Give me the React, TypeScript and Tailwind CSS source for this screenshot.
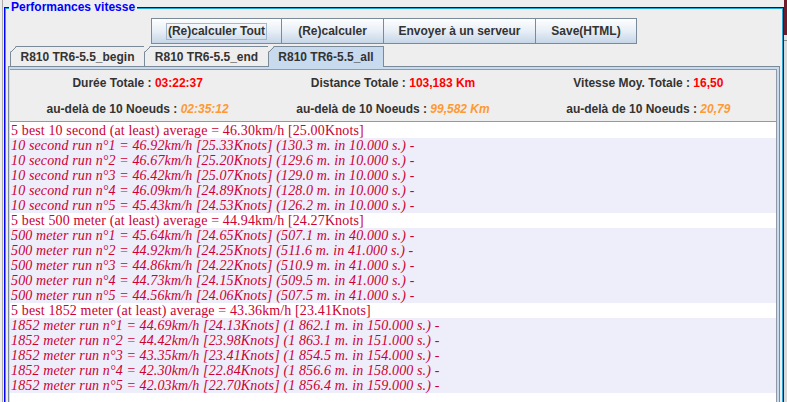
const sections = [
  {
    title: '5 best 10 second (at least) average = 46.30km/h [25.00Knots]',
    runs: [
      '10 second run n°1 = 46.92km/h [25.33Knots] (130.3 m. in 10.000 s.) -',
      '10 second run n°2 = 46.67km/h [25.20Knots] (129.6 m. in 10.000 s.) -',
      '10 second run n°3 = 46.42km/h [25.07Knots] (129.0 m. in 10.000 s.) -',
      '10 second run n°4 = 46.09km/h [24.89Knots] (128.0 m. in 10.000 s.) -',
      '10 second run n°5 = 45.43km/h [24.53Knots] (126.2 m. in 10.000 s.) -',
    ],
  },
  {
    title: '5 best 500 meter (at least) average = 44.94km/h [24.27Knots]',
    runs: [
      '500 meter run n°1 = 45.64km/h [24.65Knots] (507.1 m. in 40.000 s.) -',
      '500 meter run n°2 = 44.92km/h [24.25Knots] (511.6 m. in 41.000 s.) -',
      '500 meter run n°3 = 44.86km/h [24.22Knots] (510.9 m. in 41.000 s.) -',
      '500 meter run n°4 = 44.73km/h [24.15Knots] (509.5 m. in 41.000 s.) -',
      '500 meter run n°5 = 44.56km/h [24.06Knots] (507.5 m. in 41.000 s.) -',
    ],
  },
  {
    title: '5 best 1852 meter (at least) average = 43.36km/h [23.41Knots]',
    runs: [
      '1852 meter run n°1 = 44.69km/h [24.13Knots] (1 862.1 m. in 150.000 s.) -',
      '1852 meter run n°2 = 44.42km/h [23.98Knots] (1 863.1 m. in 151.000 s.) -',
      '1852 meter run n°3 = 43.35km/h [23.41Knots] (1 854.5 m. in 154.000 s.) -',
      '1852 meter run n°4 = 42.30km/h [22.84Knots] (1 856.6 m. in 158.000 s.) -',
      '1852 meter run n°5 = 42.03km/h [22.70Knots] (1 856.4 m. in 159.000 s.) -',
    ],
  },
];

const buttons = [
  { label: '(Re)calculer Tout', w: 'w-[131px]', focus: true },
  { label: '(Re)calculer', w: 'w-[103px]' },
  { label: 'Envoyer à un serveur', w: 'w-[153px]' },
  { label: 'Save(HTML)', w: 'w-[102px]' },
];

const tabs = [
  { label: 'R810 TR6-5.5_begin', w: 'w-[134px]' },
  { label: 'R810 TR6-5.5_end', w: 'w-[124px]' },
  { label: 'R810 TR6-5.5_all', w: 'w-[116px]', active: true },
];

function Tab({ label, w, active }: { label: string; w: string; active?: boolean }) {
  return (
    <div
      className={`relative flex items-center justify-center border-t border-l border-[#7a8a99] text-[12px] font-bold text-[#333333] [clip-path:polygon(6px_0,100%_0,100%_100%,0_100%,0_6px)] ${w} ${
        active ? 'z-10 -mb-px h-[21px] border-r bg-[#c8daee]' : 'h-[20px] bg-[#eeeeee]'
      }`}
    >
      <svg className="absolute left-[-1px] top-[-1px]" width="8" height="8">
        <line x1="0.5" y1="6.5" x2="6.5" y2="0.5" stroke="#7a8a99" strokeWidth="1" />
      </svg>
      <span className={active ? '-mt-px' : ''}>{label}</span>
    </div>
  );
}

function Stat({ label, value, sub }: { label: string; value: string; sub?: boolean }) {
  return (
    <div className="flex items-center justify-center text-[12px] font-bold text-[#333333]">
      <span className="whitespace-pre">{label} </span>
      <span className={sub ? 'italic text-[#ff9933]' : 'text-[#ff0000]'}>{value}</span>
    </div>
  );
}

export default function App() {
  return (
    <div className="flex h-[402px] w-[787px] overflow-hidden bg-[#eeeeee] font-['Liberation_Sans',Arial,sans-serif]">
      <div className="flex w-[4px] shrink-0">
        <div className="w-[2px]" />
        <div className="w-[1px] bg-[#a9a9a9]" />
      </div>

      <div className="relative mt-[7px] w-[780px] shrink-0 border border-b-0 border-[#0000ff]">
        <span className="absolute left-[4px] top-[-9px] bg-[#eeeeee] px-[2px] text-[12px] font-bold leading-[16px] text-[#0000ff]">
          Performances vitesse
        </span>
        <div className="flex h-full flex-col border border-b-0 border-[#2aa6d4] px-[2px] pt-[9px]">
          <div className="flex justify-center">
            {buttons.map((b) => (
              <div
                key={b.label}
                className={`flex h-[26px] items-center justify-center border border-[#7a8a99] bg-gradient-to-b from-[#fdfeff] via-[#e8eff6] to-[#c6d6e7] text-[12px] font-bold text-[#333333] ${b.w} -ml-px first:ml-0`}
              >
                <span className={b.focus ? 'border border-[#a3b8cc] px-[1px] leading-[15px]' : ''}>{b.label}</span>
              </div>
            ))}
          </div>

          <div className="mt-[2px] flex pl-[2px]">
            {tabs.map((t) => (
              <Tab key={t.label} {...t} />
            ))}
          </div>

          <div className="flex min-h-0 flex-1 flex-col border border-b-0 border-[#7a8a99] bg-[#c8daee] pl-[1px] pr-[2px] pt-[2px]">
            <div className="flex min-h-0 flex-1 flex-col border-t border-r border-[#8e9aa6] bg-[#eeeeee]">
              <div className="grid h-[51px] grid-cols-3 grid-rows-[26px_24px]">
                <Stat label="Durée Totale :" value="03:22:37" />
                <Stat label="Distance Totale :" value="103,183 Km" />
                <Stat label="Vitesse Moy. Totale :" value="16,50" />
                <div className="grid pt-[2px]"><Stat label={'au-delà de 10 Noeuds :'} value="02:35:12" sub /></div>
                <div className="grid pt-[2px]"><Stat label={'au-delà de 10 Noeuds :'} value="99,582 Km" sub /></div>
                <div className="grid pt-[2px]"><Stat label={'au-delà de 10 Noeuds :'} value="20,79" sub /></div>
              </div>

              <div className="min-h-0 flex-1 border-t border-[#8e9aa6] bg-white pt-[1px] font-['Liberation_Serif','Times_New_Roman',serif] text-[14px] tracking-[0.13px] text-[#cc0033]">
                {sections.map((s) => (
                  <div key={s.title}>
                    <div className="h-[15px] whitespace-pre pl-[1px] leading-[15px]">{s.title}</div>
                    {s.runs.map((r) => (
                      <div key={r} className="h-[15px] whitespace-pre bg-[#eeeefb] pl-[1px] italic leading-[15px]">
                        {r}
                      </div>
                    ))}
                  </div>
                ))}
              </div>
            </div>
          </div>
        </div>
      </div>

      <div className="flex w-[3px] shrink-0 flex-col">
        <div className="h-[35px] bg-[#6e1c2c]" />
        <div className="h-[5px] bg-[#e2e2e2]" />
        <div className="h-[1px] bg-[#8a8a8a]" />
        <div className="flex-1 bg-[#d9d9d9]" />
      </div>
    </div>
  );
}
